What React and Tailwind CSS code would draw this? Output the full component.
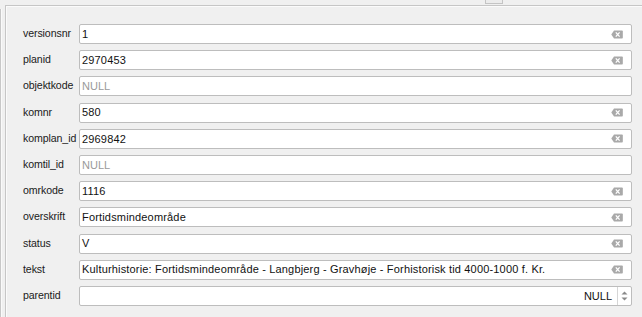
import React from "react";

const rows = [
  { label: "versionsnr", value: "1", clear: true },
  { label: "planid", value: "2970453", clear: true },
  { label: "objektkode", value: null },
  { label: "komnr", value: "580", clear: true },
  { label: "komplan_id", value: "2969842", clear: true },
  { label: "komtil_id", value: null },
  { label: "omrkode", value: "1116", clear: true },
  { label: "overskrift", value: "Fortidsmindeområde", clear: true },
  { label: "status", value: "V", clear: true },
  {
    label: "tekst",
    value:
      "Kulturhistorie: Fortidsmindeområde - Langbjerg - Gravhøje - Forhistorisk tid 4000-1000 f. Kr.",
    clear: true,
  },
];

function ClearIcon() {
  return (
    <svg width="12" height="9" viewBox="0 0 12 9" className="shrink-0">
      <path d="M3 0.5 H11 a0.8 0.8 0 0 1 0.8 0.8 V7.7 a0.8 0.8 0 0 1 -0.8 0.8 H3 L0.3 4.5 Z" fill="#a9a9a9" />
      <path d="M4.8 2.4 L8.6 6.6 M8.6 2.4 L4.8 6.6" stroke="#ffffff" strokeWidth="1.3" />
    </svg>
  );
}

function Label({ children }) {
  return (
    <div className="flex items-center h-5 text-[10.6px] tracking-[-0.1px] text-[#1a1a1a] whitespace-nowrap">
      {children}
    </div>
  );
}

function Row({ label, value, clear }) {
  return (
    <>
      <Label>{label}</Label>
      <div className="flex items-center h-5 bg-white border border-[#bdbdbd] rounded-[2px] pl-[2px] pr-[8px] text-[11px]">
        {value === null ? (
          <span className="text-[#9a9a9a] flex-1">NULL</span>
        ) : (
          <span className="text-[#111] flex-1 whitespace-nowrap tracking-[0.17px]">{value}</span>
        )}
        {clear && <ClearIcon />}
      </div>
    </>
  );
}

export default function App() {
  return (
    <div
      className="w-[642px] h-[317px] bg-[#f0f0f0] relative overflow-hidden"
      style={{ fontFamily: "'Liberation Sans', Arial, sans-serif" }}
    >
      {/* top button remnant */}
      <div className="absolute left-[485px] top-0 w-[18px] h-[4px] border border-t-0 border-[#c4c4c4] bg-[#ececec]" />
      {/* outer left line */}
      <div className="absolute left-0 top-[9px] bottom-0 w-[1px] bg-[#c8c8c8]" />
      <div className="absolute left-[1px] top-[9px] bottom-0 w-[1px] bg-[#fafafa]" />
      {/* frame */}
      <div className="absolute left-[5px] top-[5px] right-0 bottom-0 border-t border-l border-[#c6c6c6]">
        <div className="border-t border-l border-[#fbfbfb] h-full">
          <div className="grid grid-cols-[56px_553px] gap-y-[6.2px] pl-[16px] pt-[17px]">
            {rows.map((r) => (
              <Row key={r.label} {...r} />
            ))}
            <Label>parentid</Label>
            <div className="flex items-center h-5 bg-white border border-[#bdbdbd] rounded-[2px] text-[11px]">
              <span className="flex-1 text-right pr-[5px] text-[#111]">NULL</span>
              <div className="w-[14px] h-full border-l border-[#d6d6d6] flex flex-col items-center justify-center gap-[2px]">
                <svg width="7" height="4" viewBox="0 0 7 4"><path d="M0.5 3.5 L3.5 0.5 L6.5 3.5 Z" fill="#8a8a8a" /></svg>
                <svg width="7" height="4" viewBox="0 0 7 4"><path d="M0.5 0.5 L3.5 3.5 L6.5 0.5 Z" fill="#8a8a8a" /></svg>
              </div>
            </div>
          </div>
        </div>
      </div>
    </div>
  );
}
